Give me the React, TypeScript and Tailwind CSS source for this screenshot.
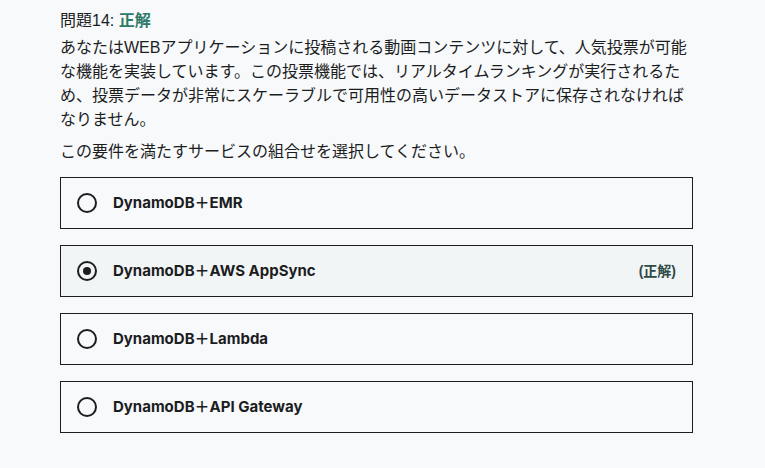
const options = [
  { label: "DynamoDB＋EMR", selected: false, correct: false },
  { label: "DynamoDB＋AWS AppSync", selected: true, correct: true },
  { label: "DynamoDB＋Lambda", selected: false, correct: false },
  { label: "DynamoDB＋API Gateway", selected: false, correct: false },
];

function Radio({ checked }: { checked: boolean }) {
  return (
    <span className="flex h-5 w-5 shrink-0 items-center justify-center rounded-full border-2 border-[#1c1d1f]">
      {checked && <span className="h-2 w-2 rounded-full bg-[#1c1d1f]" />}
    </span>
  );
}

export default function App() {
  return (
    <div className="min-h-[468px] w-full bg-[#f7f9fa] text-[#1c1d1f] [font-family:'Liberation_Sans','Noto_Sans_CJK_JP',sans-serif]">
      <div className="w-[633px] pl-[60px] pt-[10px] box-content">
        <div className="text-[16px] leading-[22px]">
          問題14: <span className="font-bold text-[#2d7a68]">正解</span>
        </div>
        <p className="mt-[4px] text-[16px] leading-[24px]">
          あなたはWEBアプリケーションに投稿される動画コンテンツに対して、人気投票が可能な機能を実装しています。この投票機能では、リアルタイムランキングが実行されるため、投票データが非常にスケーラブルで可用性の高いデータストアに保存されなければなりません。
        </p>
        <p className="mt-[8px] text-[16px] leading-[24px]">
          この要件を満たすサービスの組合せを選択してください。
        </p>
        <div className="mt-[13px] flex flex-col gap-[16px]">
          {options.map((o) => (
            <div
              key={o.label}
              className={`flex h-[52px] items-center border border-[#1c1d1f] pl-[16px] pr-[16px] ${
                o.correct ? "bg-[#f2f5f5]" : "bg-[#f7f9fa]"
              }`}
            >
              <Radio checked={o.selected} />
              <span className="ml-[16px] text-[15px] font-bold [font-family:Inter,'Noto_Sans_CJK_JP',sans-serif]">
                {o.label}
              </span>
              {o.correct && (
                <span className="ml-auto text-[14px] font-bold text-[#2e4a47]">(正解)</span>
              )}
            </div>
          ))}
        </div>
      </div>
    </div>
  );
}
